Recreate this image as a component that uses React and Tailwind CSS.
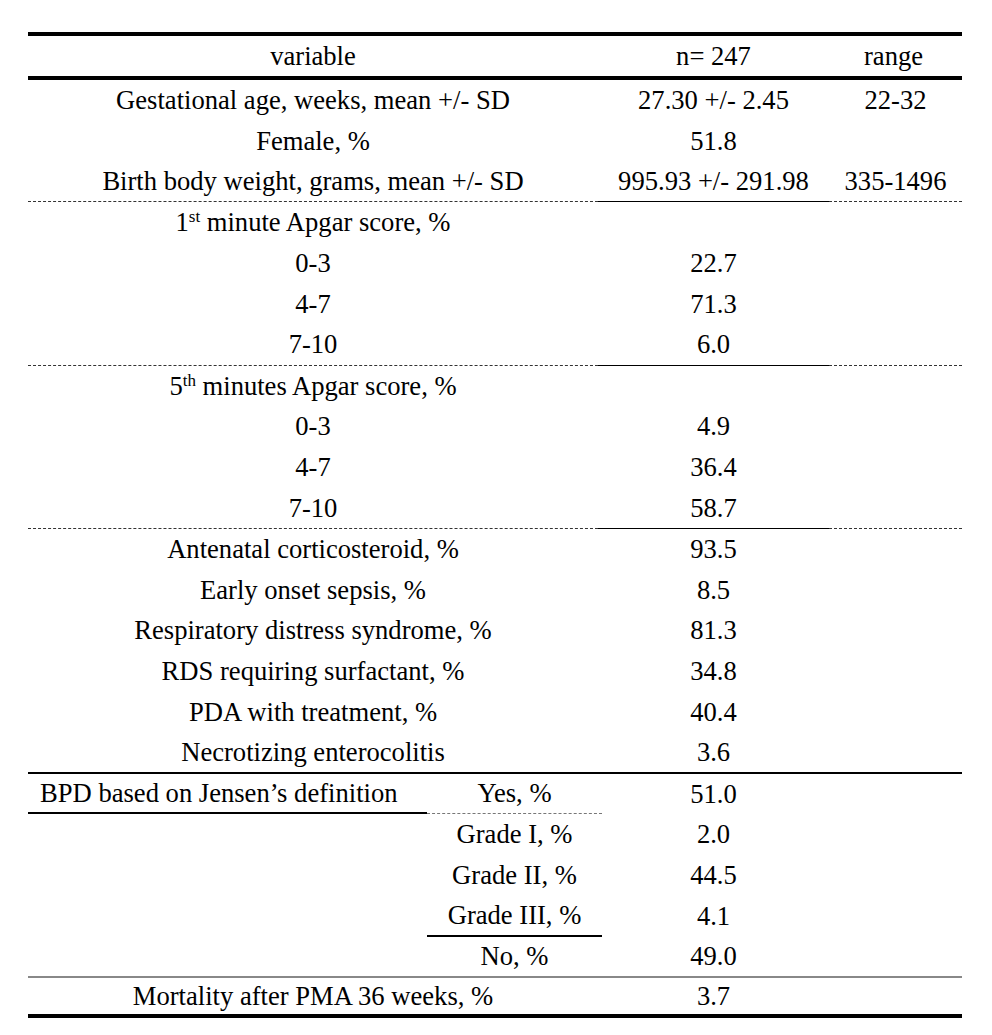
import React from 'react';

const dashSide = 'border-b border-dashed border-[#333]';
const dashMid = 'border-b border-solid border-black';
const solidLine = 'border-b-2 border-solid border-black';

const groups = [
    {
        end: 'dash',
        rows: [
            ['Gestational age, weeks, mean +/- SD', '27.30 +/- 2.45', '22-32'],
            ['Female, %', '51.8', ''],
            ['Birth body weight, grams, mean +/- SD', '995.93 +/- 291.98', '335-1496'],
        ],
    },
    {
        end: 'dash',
        rows: [
            [<span>1<sup className="text-[17px] -top-[9px]">st</sup> minute Apgar score, %</span>, '', ''],
            ['0-3', '22.7', ''],
            ['4-7', '71.3', ''],
            ['7-10', '6.0', ''],
        ],
    },
    {
        end: 'dash',
        rows: [
            [<span>5<sup className="text-[17px] -top-[9px]">th</sup> minutes Apgar score, %</span>, '', ''],
            ['0-3', '4.9', ''],
            ['4-7', '36.4', ''],
            ['7-10', '58.7', ''],
        ],
    },
    {
        end: 'solid',
        rows: [
            ['Antenatal corticosteroid, %', '93.5', ''],
            ['Early onset sepsis, %', '8.5', ''],
            ['Respiratory distress syndrome, %', '81.3', ''],
            ['RDS requiring surfactant, %', '34.8', ''],
            ['PDA with treatment, %', '40.4', ''],
            ['Necrotizing enterocolitis', '3.6', ''],
        ],
    },
];

const bpd = [
    ['Yes, %', '51.0', 'dash'],
    ['Grade I, %', '2.0', ''],
    ['Grade II, %', '44.5', ''],
    ['Grade III, %', '4.1', 'solid'],
    ['No, %', '49.0', ''],
];

const Row = ({ label, n, range, end }) => {
    const side = end === 'dash' ? dashSide : end === 'solid' ? solidLine : '';
    const mid = end === 'dash' ? dashMid : end === 'solid' ? solidLine : '';
    return (
        <div className="flex h-[40.8px]">
            <div className={`w-[570px] flex items-center justify-center ${side}`}>{label}</div>
            <div className={`w-[231px] flex items-center justify-center ${mid}`}>{n}</div>
            <div className={`w-[133px] flex items-center justify-center ${side}`}>{range}</div>
        </div>
    );
};

const App = () => {
    return (
        <div className="w-[992px] h-[1035px] bg-white text-black font-['Liberation_Serif','Times_New_Roman',serif] text-[26.6px] leading-none">
            <div className="ml-[28px] pt-[32px] w-[934px]">
                <div className="flex h-[48px] border-t-4 border-b-4 border-black">
                    <div className="w-[570px] flex items-center justify-center">variable</div>
                    <div className="w-[231px] flex items-center justify-center">n= 247</div>
                    <div className="w-[133px] flex items-center justify-center pr-[4px]">range</div>
                </div>

                {groups.map((group, gi) =>
                    group.rows.map((r, i) => (
                        <Row
                            key={`${gi}-${i}`}
                            label={r[0]}
                            n={r[1]}
                            range={r[2]}
                            end={i === group.rows.length - 1 ? group.end : ''}
                        />
                    ))
                )}

                {bpd.map((r, i) => (
                    <div key={i} className={`flex h-[40.8px] ${i === bpd.length - 1 ? 'border-b-2 border-[#888]' : ''}`}>
                        <div className={`w-[399px] flex items-center pl-[12px] ${i === 0 ? 'border-b-2 border-black' : ''}`}>
                            {i === 0 ? 'BPD based on Jensen\u2019s definition' : ''}
                        </div>
                        <div
                            className={`w-[175px] flex items-center justify-center ${
                                r[2] === 'dash' ? 'border-b border-dashed border-[#777]' : r[2] === 'solid' ? 'border-b-2 border-black' : ''
                            }`}
                        >
                            {r[0]}
                        </div>
                        <div className="w-[227px] flex items-center justify-center pr-[4px]">{r[1]}</div>
                        <div className="w-[133px]" />
                    </div>
                ))}

                <div className="flex h-[40.8px] border-b-4 border-black">
                    <div className="w-[570px] flex items-center justify-center">Mortality after PMA 36 weeks, %</div>
                    <div className="w-[231px] flex items-center justify-center">3.7</div>
                    <div className="w-[133px]" />
                </div>
            </div>
        </div>
    );
};

export default App;
